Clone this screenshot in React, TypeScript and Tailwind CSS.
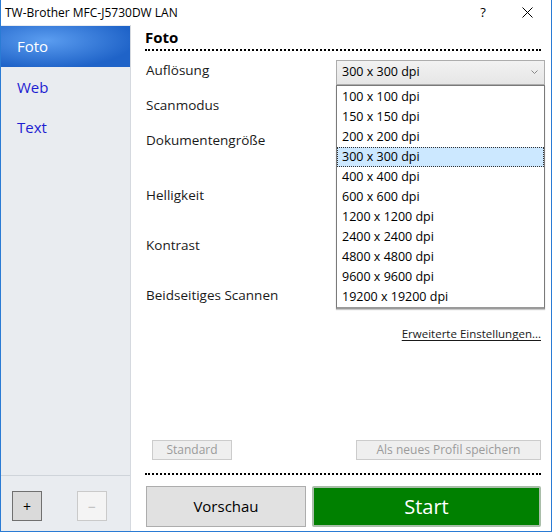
import React from "react";

const font = { fontFamily: '"Open Sans", "Noto Sans", sans-serif' };

const resolutions = [
  "100 x 100 dpi",
  "150 x 150 dpi",
  "200 x 200 dpi",
  "300 x 300 dpi",
  "400 x 400 dpi",
  "600 x 600 dpi",
  "1200 x 1200 dpi",
  "2400 x 2400 dpi",
  "4800 x 4800 dpi",
  "9600 x 9600 dpi",
  "19200 x 19200 dpi",
];

const TitleBar = () => (
  <div className="flex h-[25px] items-center bg-white pl-[4px] text-[12px] text-black">
    <span className="flex-1">TW-Brother MFC-J5730DW LAN</span>
    <span className="w-[20px] text-center text-[13px]">?</span>
    <span className="ml-[24px] mr-[14px] flex w-[20px] justify-center">
      <svg width="11" height="11" viewBox="0 0 11 11">
        <path d="M0.5 0.5 L10.5 10.5 M10.5 0.5 L0.5 10.5" stroke="#000" strokeWidth="1" />
      </svg>
    </span>
  </div>
);

const Sidebar = () => (
  <div className="flex w-[130px] flex-col border-r border-[#d5d9df] bg-[#e9ecf0]">
    <div className="flex-1 pt-[1px]">
      <div className="flex h-[41px] items-center bg-[radial-gradient(ellipse_at_35%_35%,#5b9df0,#1f63c8_75%)] pl-[16px] text-[15px] text-white">
        Foto
      </div>
      <div className="flex h-[40px] items-center pl-[16px] text-[15px] text-[#1e1ed0]">Web</div>
      <div className="flex h-[40px] items-center pl-[16px] text-[15px] text-[#1e1ed0]">Text</div>
    </div>
    <div className="flex h-[56px] items-start border-t border-[#cfd4da] pt-[15px]">
      <button className="ml-[11px] flex h-[30px] w-[30px] items-center justify-center border border-[#707070] bg-[#dadada] text-[14px] text-black">
        +
      </button>
      <button className="ml-[35px] flex h-[30px] w-[30px] items-center justify-center border border-[#cacaca] bg-[#f4f4f4] text-[14px] text-[#b8b8b8]">
        −
      </button>
    </div>
  </div>
);

const Row = ({ label, h, children }: { label: string; h: string; children?: React.ReactNode }) => (
  <div className={`relative flex ${h}`}>
    <span className="pl-[1px] text-[13.5px] leading-[20px] text-[#1a1a1a]">{label}</span>
    {children}
  </div>
);

const ResolutionSelect = () => (
  <div className="absolute left-[191px] top-0 z-10 w-[209px]">
    <div className="flex h-[25px] items-center border border-[#adadad] bg-[linear-gradient(#f2f2f2,#e6e6e6)] pl-[5px] pr-[6px] text-[12.5px] text-black">
      <span className="flex-1">300 x 300 dpi</span>
      <svg width="7" height="5" viewBox="0 0 7 5">
        <path d="M0.5 0.5 L3.5 3.5 L6.5 0.5" fill="none" stroke="#888" strokeWidth="1" />
      </svg>
    </div>
    <ul className="border border-b-[2px] border-[#7a7a7a] border-b-[#9a9a9a] bg-white pt-[1px] shadow-[0_1px_1px_#c8c8c8]">
      {resolutions.map((r) => (
        <li
          key={r}
          className={
            r === "300 x 300 dpi"
              ? "flex h-[20px] items-center border border-dotted border-[#333] bg-[#cce8ff] pl-[4px] text-[12.5px] text-black"
              : "flex h-[20px] items-center pl-[5px] text-[12.5px] text-black"
          }
        >
          {r}
        </li>
      ))}
    </ul>
  </div>
);

export default function App() {
  return (
    <div
      style={font}
      className="flex h-[532px] w-[552px] flex-col border-x border-b border-[#2a7bd4] bg-white"
    >
      <TitleBar />
      <div className="flex min-h-0 flex-1">
        <Sidebar />
        <div className="flex flex-1 flex-col pb-[4px] pl-[14px] pr-[10px]">
          <div className="flex h-[26px] items-end border-b-2 border-dotted border-black pb-[2px] text-[15px] font-bold leading-[20px] text-black">
            Foto
          </div>
          <div className="mt-[9px] flex flex-col">
            <Row label="Auflösung" h="h-[35px]">
              <ResolutionSelect />
            </Row>
            <Row label="Scanmodus" h="h-[35px]" />
            <Row label="Dokumentengröße" h="h-[55px]" />
            <Row label="Helligkeit" h="h-[50px]" />
            <Row label="Kontrast" h="h-[50px]" />
            <Row label="Beidseitiges Scannen" h="h-[30px]" />
          </div>
          <div className="mt-[9px] flex h-[20px] items-center justify-end">
            <span className="text-[11.5px] text-[#1a1a1a] underline underline-offset-2">Erweiterte Einstellungen...</span>
          </div>
          <div className="flex-1" />
          <div className="flex h-[20px] items-stretch justify-between">
            <button className="ml-[7px] w-[80px] border border-[#cccccc] bg-[#efefef] text-[12px] text-[#9b9b9b]">
              Standard
            </button>
            <button className="w-[185px] border border-[#cccccc] bg-[#efefef] text-[12px] text-[#9b9b9b]">
              Als neues Profil speichern
            </button>
          </div>
          <div className="mt-[13px] border-b-2 border-dotted border-black" />
          <div className="mt-[11px] flex h-[41px] gap-[6px]">
            <button className="ml-[1px] w-[160px] border border-[#adadad] bg-[#e1e1e1] text-[15px] text-black">
              Vorschau
            </button>
            <button className="flex-1 rounded-[2px] border-2 border-[#a9bea9] bg-[#008000] text-[20px] text-white">
              Start
            </button>
          </div>
        </div>
      </div>
    </div>
  );
}
